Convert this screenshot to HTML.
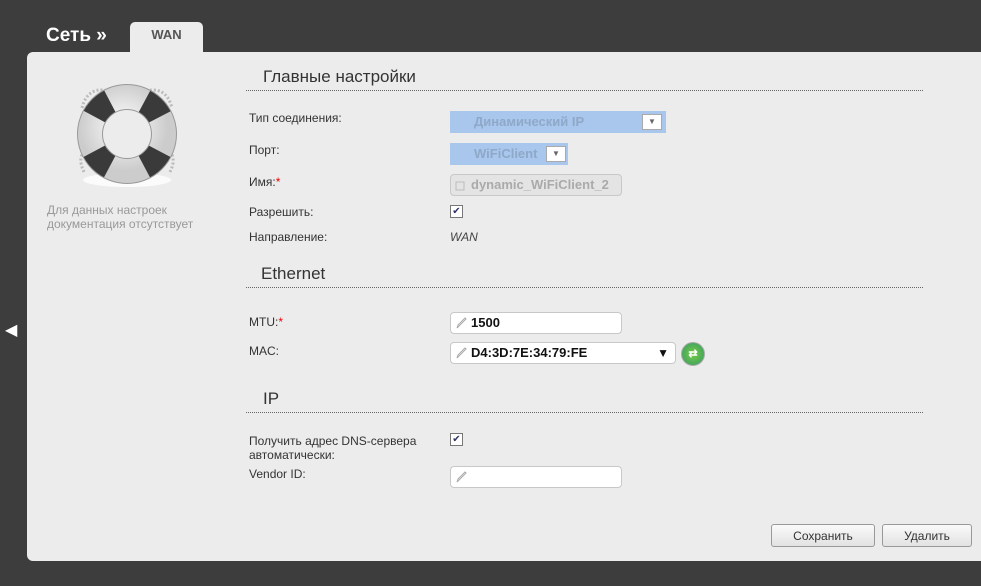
<!DOCTYPE html>
<html><head><meta charset="utf-8"><style>
body{margin:0;width:981px;height:586px;background:#3d3d3d;position:relative;overflow:hidden;font-family:"Liberation Sans",Arial,sans-serif;font-size:12px;color:#333}
.a{position:absolute}
.panel{left:27px;top:52px;width:960px;height:509px;background:#ececec;border-radius:6px 0 0 6px}
.tab{left:130px;top:22px;width:73px;height:31px;background:#ececec;border-radius:5px 5px 0 0;font-weight:bold;font-size:13px;color:#555;text-align:center;line-height:26px}
.h{font-size:17px;color:#333}
.line{border-top:1px dotted #666;height:0;left:246px;width:677px}
.lbl{left:249px;font-size:12px;color:#333}
.inp{background:#fff;border:1px solid #c8c8c8;border-radius:4px;height:22px;box-sizing:border-box;font-weight:bold;font-size:13px;color:#111;line-height:20px;padding-left:20px}
.pen{position:absolute;left:4px;top:4px}
.sel{background:#a9c6ec;height:22px;color:#8ea8c8;font-weight:bold;font-size:13px;line-height:22px;padding-left:24px;box-sizing:border-box}
.dd{position:absolute;top:3px;width:18px;height:14px;background:#fff;border:1px solid #aaa;font-size:8px;color:#666;text-align:center;line-height:14px}
.cb{width:11px;height:11px;border:1px solid #777;background:#fff;font-size:10px;line-height:11px;text-align:center;color:#336}
.btn{top:524px;height:23px;border:1px solid #999;border-radius:3px;background:linear-gradient(#fafafa,#e2e2e2);text-align:center;line-height:23px;font-size:12px;color:#333;box-sizing:border-box}
</style></head><body>
<div class="a" style="left:46px;top:25px;font-size:19px;font-weight:bold;color:#fff">Сеть »</div>
<div class="a tab">WAN</div>
<div class="a panel"></div>
<div class="a" style="left:5px;top:320px;color:#fff;font-size:16px">&#9664;</div>
<svg class="a" style="left:70px;top:80px" width="115" height="110" viewBox="0 0 115 110">
<defs><radialGradient id="g" cx="45%" cy="40%" r="60%"><stop offset="0" stop-color="#fff"/><stop offset="1" stop-color="#ccc"/></radialGradient></defs>
<ellipse cx="57" cy="100" rx="44" ry="7" fill="#fff" opacity=".8"/>
<path d="M12 28 Q18 4 42 12 M72 12 Q96 4 102 28 M14 92 Q6 76 18 68 M100 92 Q108 76 96 68" stroke="#bbb" stroke-width="3" fill="none" stroke-dasharray="2 2"/>
<circle cx="57" cy="54" r="37" fill="none" stroke="url(#g)" stroke-width="25"/>
<circle cx="57" cy="54" r="37" fill="none" stroke="#3a3a3a" stroke-width="25" stroke-dasharray="22 36.1" stroke-dashoffset="-18"/>
<circle cx="57" cy="54" r="49.5" fill="none" stroke="#999" stroke-width="1"/>
<circle cx="57" cy="54" r="24.5" fill="none" stroke="#999" stroke-width="1"/>
</svg>
<div class="a" style="left:47px;top:203px;color:#999;line-height:14px">Для данных настроек<br>документация отсутствует</div>
<div class="a h" style="left:263px;top:67px">Главные настройки</div>
<div class="a line" style="top:90px"></div>
<div class="a lbl" style="top:111px">Тип соединения:</div>
<div class="a lbl" style="top:143px">Порт:</div>
<div class="a lbl" style="top:175px">Имя:<span style="color:#e00">*</span></div>
<div class="a lbl" style="top:205px">Разрешить:</div>
<div class="a lbl" style="top:230px">Направление:</div>
<div class="a sel" style="left:450px;top:111px;width:216px">Динамический IP<span class="dd" style="left:192px">&#9660;</span></div>
<div class="a sel" style="left:450px;top:143px;width:118px">WiFiClient<span class="dd" style="left:96px">&#9660;</span></div>
<div class="a inp" style="left:450px;top:174px;width:172px;background:#e4e4e4;color:#aaa"><svg class="pen" width="10" height="12"><rect x="1" y="3" width="8" height="8" fill="none" stroke="#bbb"/></svg>dynamic_WiFiClient_2</div>
<div class="a cb" style="left:450px;top:205px">&#10004;</div>
<div class="a" style="left:450px;top:230px;font-style:italic;color:#444">WAN</div>
<div class="a h" style="left:261px;top:264px">Ethernet</div>
<div class="a line" style="top:287px"></div>
<div class="a lbl" style="top:315px">MTU:<span style="color:#e00">*</span></div>
<div class="a lbl" style="top:344px">MAC:</div>
<div class="a inp" style="left:450px;top:312px;width:172px"><svg class="pen" width="12" height="12"><path d="M2 11 L3 8 L10 1 L11 2 L4 9 Z" fill="none" stroke="#aaa"/></svg>1500</div>
<div class="a inp" style="left:450px;top:342px;width:226px"><svg class="pen" width="12" height="12"><path d="M2 11 L3 8 L10 1 L11 2 L4 9 Z" fill="none" stroke="#aaa"/></svg>D4:3D:7E:34:79:FE<span style="position:absolute;right:6px;font-size:12px">&#9660;</span></div>
<div class="a" style="left:681px;top:342px;width:22px;height:22px;border-radius:50%;background:radial-gradient(#7c4,#396);border:1px solid #aaa;color:#fff;font-size:11px;text-align:center;line-height:22px;font-weight:bold">⇄</div>
<div class="a h" style="left:263px;top:389px">IP</div>
<div class="a line" style="top:412px"></div>
<div class="a lbl" style="top:434px;line-height:14px">Получить адрес DNS-сервера<br>автоматически:</div>
<div class="a cb" style="left:450px;top:433px">&#10004;</div>
<div class="a lbl" style="top:467px">Vendor ID:</div>
<div class="a inp" style="left:450px;top:466px;width:172px"><svg class="pen" width="12" height="12"><path d="M2 11 L3 8 L10 1 L11 2 L4 9 Z" fill="none" stroke="#aaa"/></svg></div>
<div class="a btn" style="left:771px;width:104px">Сохранить</div>
<div class="a btn" style="left:882px;width:90px">Удалить</div>
</body></html>
